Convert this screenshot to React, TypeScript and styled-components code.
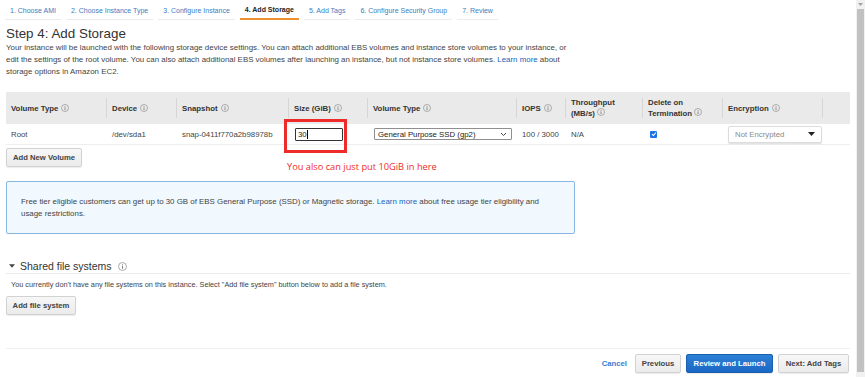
import React from 'react';
import styled, { createGlobalStyle } from 'styled-components';

const GlobalStyle = createGlobalStyle`
  html, body {
    margin: 0;
    padding: 0;
    background: #ffffff;
    overflow: hidden;
  }
  body {
    font-family: "Liberation Sans", Arial, sans-serif;
    color: #444;
  }
`;

const colors = {
  text: '#444444',
  heading: '#333333',
  link: '#1166bb',
  tabLink: '#3b7dc1',
  orange: '#ec912d',
  headBg: '#eaeaea',
};

const Page = styled.div`
  display: flex;
  width: 865px;
  height: 377px;
`;

const Main = styled.div`
  flex: 1;
  display: flex;
  flex-direction: column;
  padding: 0 6px 0 6px;
  min-width: 0;
`;

const Tabs = styled.nav`
  display: flex;
  height: 20px;
  margin-left: -1px;
`;

const Tab = styled.div<{ $active?: boolean }>`
  display: flex;
  align-items: center;
  padding: 1px 5px 0;
  margin-right: 5px;
  font-size: 7px;
  color: ${({ $active }) => ($active ? '#222' : colors.tabLink)};
  font-weight: ${({ $active }) => ($active ? 700 : 400)};
  border-bottom: ${({ $active }) => ($active ? `2px solid ${colors.orange}` : '1px solid #ececec')};
  white-space: nowrap;
`;

const Title = styled.h1`
  margin: 6px 0 0;
  font-size: 13.4px;
  line-height: 16px;
  font-weight: 400;
  color: ${colors.heading};
`;

const Intro = styled.p`
  margin: 0;
  font-size: 7.9px;
  line-height: 12px;
  color: ${colors.text};
  width: 570px;
`;

const Link = styled.a`
  color: ${colors.link};
  text-decoration: none;
`;

const StorageSection = styled.section`
  position: relative;
  margin-top: 14px;
`;

const cols = '101px 70px 112px 79px 149px 49px 77px 80px 100px 27px';

const TableHead = styled.div`
  display: grid;
  grid-template-columns: ${cols};
  height: 32px;
  background: ${colors.headBg};
`;

const HeadCell = styled.div<{ $last?: boolean }>`
  position: relative;
  display: flex;
  align-items: center;
  gap: 3px;
  padding-left: 5px;
  font-size: 7.8px;
  line-height: 11px;
  font-weight: 700;
  color: ${colors.heading};

  &::after {
    content: '';
    display: ${({ $last }) => ($last ? 'none' : 'block')};
    position: absolute;
    right: 0;
    top: 6px;
    bottom: 6px;
    width: 1px;
    background: #d6d6d6;
  }
`;

const TableRow = styled.div`
  display: grid;
  grid-template-columns: ${cols};
  height: 20px;
  border-bottom: 1px solid #eeeeee;
`;

const Cell = styled.div`
  display: flex;
  align-items: center;
  padding-left: 5px;
  font-size: 7.8px;
  color: ${colors.text};
  white-space: nowrap;
`;

const SizeInput = styled.div`
  display: flex;
  align-items: center;
  width: 44px;
  height: 11px;
  margin-left: 1px;
  padding-left: 2px;
  border: 1px solid #333;
  border-radius: 1px;
  font-size: 7.8px;
  color: #222;
`;

const Caret = styled.span`
  width: 1px;
  height: 9px;
  background: #000;
`;

const NativeSelect = styled.div`
  display: flex;
  align-items: center;
  justify-content: space-between;
  box-sizing: border-box;
  width: 138px;
  height: 12px;
  margin-left: 1px;
  padding: 0 4px 0 3px;
  border: 1px solid #8f8f8f;
  border-radius: 1px;
  font-size: 7.8px;
  color: #222;
`;

const CheckBox = styled.span`
  display: flex;
  align-items: center;
  justify-content: center;
  width: 7px;
  height: 7px;
  margin-left: 2px;
  border-radius: 1px;
  background: #1a73e8;
`;

const EncryptSelect = styled.div`
  display: flex;
  align-items: center;
  justify-content: space-between;
  box-sizing: border-box;
  width: 94px;
  height: 17px;
  padding: 0 6px 0 6px;
  border: 1px solid #dcdcdc;
  border-radius: 2px;
  box-shadow: 0 1px 1px rgba(0, 0, 0, 0.12);
  background: #fff;
  font-size: 7.8px;
  color: #8a8a8a;
`;

const Button = styled.button<{ $primary?: boolean; $width?: number }>`
  display: inline-flex;
  align-items: center;
  justify-content: center;
  box-sizing: border-box;
  height: 19px;
  width: ${({ $width }) => ($width ? `${$width}px` : 'auto')};
  padding: 0 4px;
  border-radius: 2px;
  font-family: "Liberation Sans", Arial, sans-serif;
  font-size: 7.7px;
  font-weight: 700;
  white-space: nowrap;
  color: ${({ $primary }) => ($primary ? '#fff' : '#444')};
  background: ${({ $primary }) =>
    $primary ? 'linear-gradient(#2e7fd6, #1a68c4)' : 'linear-gradient(#f7f7f7, #ebebeb)'};
  border: 1px solid ${({ $primary }) => ($primary ? '#1a5fb0' : '#d2d2d2')};
  box-shadow: 0 1px 1px rgba(0, 0, 0, 0.08);
  cursor: pointer;
`;

const ButtonRow = styled.div<{ $top: number }>`
  display: flex;
  margin-top: ${({ $top }) => $top}px;
`;

const Annotation = styled.div`
  position: absolute;
  left: 278px;
  top: 27px;
  width: 63px;
  height: 34px;
  box-sizing: border-box;
  border: 3px solid #ee2b2b;
  pointer-events: none;
`;

const AnnotationText = styled.div`
  position: absolute;
  left: 281px;
  top: 69px;
  font-family: "Open Sans", "Noto Sans", sans-serif;
  font-size: 9.25px;
  line-height: 12px;
  color: #ee2b2b;
  white-space: nowrap;
`;

const InfoBox = styled.div`
  box-sizing: border-box;
  width: 569px;
  height: 53px;
  margin-top: 14px;
  padding: 14px 14px 0;
  background: #f1f8fe;
  border: 1px solid #86b7e3;
  border-radius: 2px;
  font-size: 7.9px;
  line-height: 12px;
  color: ${colors.text};
`;

const SectionHeader = styled.div`
  display: flex;
  align-items: center;
  gap: 6px;
  margin-top: 25px;
  height: 14px;
  padding: 0 0 0 3px;
  border-bottom: 1px solid #eaeaea;
  font-size: 10.5px;
  color: ${colors.heading};
`;

const SectionTitle = styled.span`
  display: flex;
  align-items: center;
  gap: 5px;
`;

const Note = styled.p`
  margin: 5px 0 0;
  padding-left: 5px;
  font-size: 7.3px;
  line-height: 12px;
  color: ${colors.text};
`;

const Footer = styled.footer`
  display: flex;
  align-items: center;
  justify-content: flex-end;
  gap: 5px;
  margin-top: auto;
  margin-bottom: 4px;
  padding-top: 5px;
  border-top: 1px solid #eeeeee;
  padding-right: 1px;
`;

const CancelLink = styled.a`
  margin-right: 3px;
  font-size: 7.7px;
  font-weight: 700;
  color: #3a7bd5;
  text-decoration: none;
`;

const Scrollbar = styled.div`
  width: 9px;
  background: #f1f1f1;
  display: flex;
  flex-direction: column;
  align-items: center;
`;

const ScrollArrow = styled.div`
  height: 9px;
  display: flex;
  align-items: center;
  justify-content: center;
`;

const Thumb = styled.div`
  width: 7px;
  height: 363px;
  background: #c1c1c1;
`;

const InfoIcon = ({ size = 8 }: { size?: number }) => (
  <svg width={size} height={size} viewBox="0 0 10 10">
    <circle cx="5" cy="5" r="4.4" fill="none" stroke="#8a8a8a" strokeWidth="0.8" />
    <circle cx="5" cy="3" r="0.6" fill="#777" />
    <rect x="4.5" y="4.2" width="1" height="3.4" fill="#777" />
  </svg>
);

const ChevronDown = () => (
  <svg width="7" height="5" viewBox="0 0 7 5">
    <path d="M1 1 L3.5 3.5 L6 1" fill="none" stroke="#333" strokeWidth="0.9" />
  </svg>
);

const TriangleDown = ({ color = '#222', w = 7, h = 4 }: { color?: string; w?: number; h?: number }) => (
  <svg width={w} height={h} viewBox="0 0 7 4">
    <path d="M0 0 L7 0 L3.5 4 Z" fill={color} />
  </svg>
);

const steps = [
  '1. Choose AMI',
  '2. Choose Instance Type',
  '3. Configure Instance',
  '4. Add Storage',
  '5. Add Tags',
  '6. Configure Security Group',
  '7. Review',
];

const App: React.FC = () => {
  return (
    <>
      <GlobalStyle />
      <Page>
        <Main>
          <Tabs>
            {steps.map((s) => (
              <Tab key={s} $active={s === '4. Add Storage'}>
                {s}
              </Tab>
            ))}
          </Tabs>

          <Title>Step 4: Add Storage</Title>
          <Intro>
            Your instance will be launched with the following storage device settings. You can attach additional EBS
            volumes and instance store volumes to your instance, or edit the settings of the root volume. You can also
            attach additional EBS volumes after launching an instance, but not instance store volumes.{' '}
            <Link href="#">Learn more</Link> about storage options in Amazon EC2.
          </Intro>

          <StorageSection>
            <TableHead>
              <HeadCell>Volume Type <InfoIcon /></HeadCell>
              <HeadCell>Device <InfoIcon /></HeadCell>
              <HeadCell>Snapshot <InfoIcon /></HeadCell>
              <HeadCell>Size (GiB) <InfoIcon /></HeadCell>
              <HeadCell>Volume Type <InfoIcon /></HeadCell>
              <HeadCell>IOPS <InfoIcon /></HeadCell>
              <HeadCell>
                <span>
                  Throughput
                  <br />
                  (MB/s) <InfoIcon />
                </span>
              </HeadCell>
              <HeadCell>
                <span>
                  Delete on
                  <br />
                  Termination <InfoIcon />
                </span>
              </HeadCell>
              <HeadCell>Encryption <InfoIcon /></HeadCell>
              <HeadCell $last />
            </TableHead>

            <TableRow>
              <Cell>Root</Cell>
              <Cell>/dev/sda1</Cell>
              <Cell>snap-0411f770a2b98978b</Cell>
              <Cell>
                <SizeInput>
                  30
                  <Caret />
                </SizeInput>
              </Cell>
              <Cell>
                <NativeSelect>
                  General Purpose SSD (gp2)
                  <ChevronDown />
                </NativeSelect>
              </Cell>
              <Cell>100 / 3000</Cell>
              <Cell>N/A</Cell>
              <Cell>
                <CheckBox>
                  <svg width="6" height="6" viewBox="0 0 6 6">
                    <path d="M1 3.2 L2.4 4.5 L5 1.5" fill="none" stroke="#fff" strokeWidth="1.1" />
                  </svg>
                </CheckBox>
              </Cell>
              <Cell>
                <EncryptSelect>
                  Not Encrypted
                  <TriangleDown />
                </EncryptSelect>
              </Cell>
              <Cell />
            </TableRow>

            <ButtonRow $top={3}>
              <Button $width={76}>Add New Volume</Button>
            </ButtonRow>

            <Annotation />
            <AnnotationText>You also can just put 10GiB in here</AnnotationText>
          </StorageSection>

          <InfoBox>
            Free tier eligible customers can get up to 30 GB of EBS General Purpose (SSD) or Magnetic storage.{' '}
            <Link href="#">Learn more</Link> about free usage tier eligibility and usage restrictions.
          </InfoBox>

          <SectionHeader>
            <SectionTitle>
              <TriangleDown color="#444" w={6} h={4} />
              Shared file systems
            </SectionTitle>
            <InfoIcon size={9} />
          </SectionHeader>
          <Note>
            You currently don't have any file systems on this instance. Select "Add file system" button below to add a
            file system.
          </Note>
          <ButtonRow $top={5}>
            <Button $width={70}>Add file system</Button>
          </ButtonRow>

          <Footer>
            <CancelLink href="#">Cancel</CancelLink>
            <Button $width={46}>Previous</Button>
            <Button $primary $width={87}>Review and Launch</Button>
            <Button $width={71}>Next: Add Tags</Button>
          </Footer>
        </Main>

        <Scrollbar>
          <ScrollArrow>
            <TriangleDown color="#a3a3a3" w={5} h={3} />
          </ScrollArrow>
          <Thumb />
        </Scrollbar>
      </Page>
    </>
  );
};

export default App;
